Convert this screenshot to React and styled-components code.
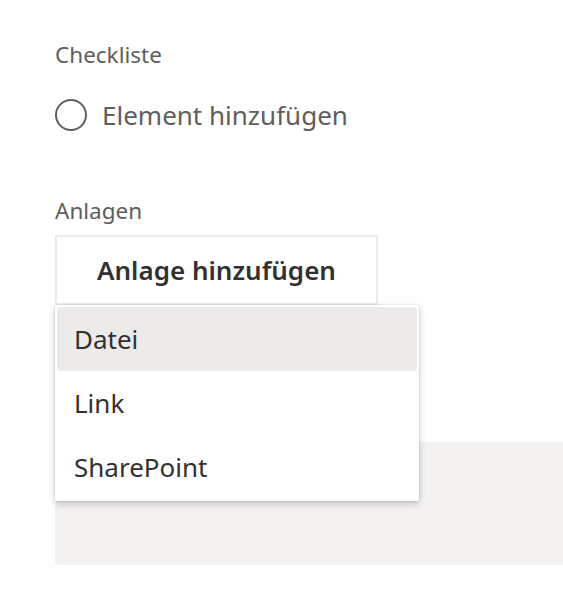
import React from 'react'
import styled, { createGlobalStyle } from 'styled-components'

const GlobalStyle = createGlobalStyle`
    html, body {
        margin: 0;
        padding: 0;
        background: #ffffff;
    }
    body {
        font-family: "Segoe UI", "Noto Sans", "Open Sans", sans-serif;
        color: #323130;
    }
`

const menuItems = ['Datei', 'Link', 'SharePoint']

const App = () => {
    return (
        <>
            <GlobalStyle />
            <StyledPage>
                <StyledLabel>Checkliste</StyledLabel>
                <StyledCheckRow>
                    <StyledCircle />
                    <StyledCheckText>Element hinzufügen</StyledCheckText>
                </StyledCheckRow>

                <StyledSectionLabel>Anlagen</StyledSectionLabel>
                <StyledDropdownWrap>
                    <StyledAddButton>Anlage hinzufügen</StyledAddButton>
                    <StyledMenu>
                        {menuItems.map((item, i) => (
                            <StyledMenuItem key={item} active={i === 0}>
                                {item}
                            </StyledMenuItem>
                        ))}
                    </StyledMenu>
                </StyledDropdownWrap>

                <StyledGrayBox />
            </StyledPage>
        </>
    )
}

export default App

const StyledPage = styled.div`
    width: 563px;
    height: 602px;
    box-sizing: border-box;
    padding: 40px 0 0 55px;
    overflow: hidden;
    display: flex;
    flex-direction: column;
`
const StyledLabel = styled.div`
    font-size: 22.5px;
    line-height: 30px;
    color: #605e5c;
`
const StyledSectionLabel = styled(StyledLabel)`
    margin-top: 64px;
`
const StyledCheckRow = styled.div`
    display: flex;
    align-items: center;
    gap: 15px;
    margin-top: 28px;
    height: 34px;
`
const StyledCircle = styled.div`
    width: 28px;
    height: 28px;
    border: 2px solid #605e5c;
    border-radius: 50%;
`
const StyledCheckText = styled.div`
    font-size: 26px;
    color: #605e5c;
`
const StyledDropdownWrap = styled.div`
    position: relative;
    margin-top: 9px;
    width: 323px;
`
const StyledAddButton = styled.div`
    height: 70px;
    box-sizing: border-box;
    border: 2px solid #edebe9;
    display: flex;
    align-items: center;
    justify-content: center;
    font-size: 26px;
    font-weight: 600;
    color: #323130;
`
const StyledMenu = styled.div`
    position: absolute;
    top: 70px;
    left: 0;
    width: 364px;
    box-sizing: border-box;
    padding: 2px;
    background: #ffffff;
    box-shadow: 0 3px 7px rgba(0, 0, 0, 0.2), 0 0 2px rgba(0, 0, 0, 0.15);
    z-index: 2;
`
const StyledMenuItem = styled.div.withConfig({
    shouldForwardProp: (prop) => prop !== 'active',
})`
    height: 64px;
    display: flex;
    align-items: center;
    padding-left: 17px;
    font-size: 26px;
    color: #323130;
    border-radius: 4px;
    background: ${(props) => (props.active ? '#edebe9' : 'transparent')};
`
const StyledGrayBox = styled.div`
    margin-top: 137px;
    height: 123px;
    background: #f3f2f1;
    border-radius: 0 0 0 4px;
`
